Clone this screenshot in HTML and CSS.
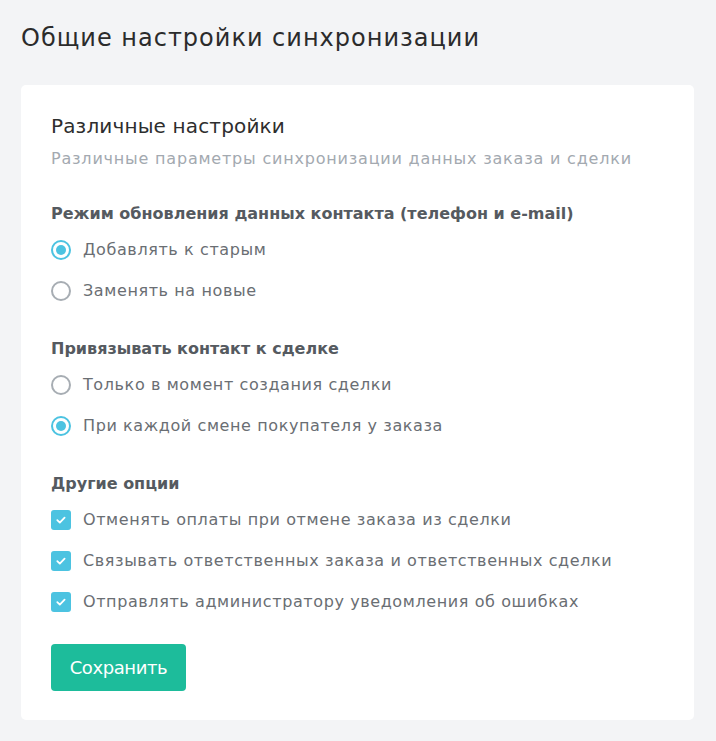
FILE: index.html
```html
<!DOCTYPE html>
<html lang="ru">
<head>
<meta charset="utf-8">
<link rel="stylesheet" href="styles.css">
</head>
<body>
<div class="page">
  <h1 class="page-title">Общие настройки синхронизации</h1>
  <div class="card">
    <h2 class="card-title">Различные настройки</h2>
    <p class="card-subtitle">Различные параметры синхронизации данных заказа и сделки</p>

    <div class="group">
      <div class="group-title">Режим обновления данных контакта (телефон и e-mail)</div>
      <label class="option"><span class="radio checked"></span><span class="label">Добавлять к старым</span></label>
      <label class="option"><span class="radio"></span><span class="label">Заменять на новые</span></label>
    </div>

    <div class="group">
      <div class="group-title">Привязывать контакт к сделке</div>
      <label class="option"><span class="radio"></span><span class="label">Только в момент создания сделки</span></label>
      <label class="option"><span class="radio checked"></span><span class="label">При каждой смене покупателя у заказа</span></label>
    </div>

    <div class="group">
      <div class="group-title">Другие опции</div>
      <label class="option"><span class="check"><svg viewBox="0 0 20 20" width="20" height="20"><path d="M6.3 10.2 L8.8 12.6 L13.6 7.6" fill="none" stroke="#fff" stroke-width="1.8" stroke-linecap="round" stroke-linejoin="round"/></svg></span><span class="label">Отменять оплаты при отмене заказа из сделки</span></label>
      <label class="option"><span class="check"><svg viewBox="0 0 20 20" width="20" height="20"><path d="M6.3 10.2 L8.8 12.6 L13.6 7.6" fill="none" stroke="#fff" stroke-width="1.8" stroke-linecap="round" stroke-linejoin="round"/></svg></span><span class="label">Связывать ответственных заказа и ответственных сделки</span></label>
      <label class="option"><span class="check"><svg viewBox="0 0 20 20" width="20" height="20"><path d="M6.3 10.2 L8.8 12.6 L13.6 7.6" fill="none" stroke="#fff" stroke-width="1.8" stroke-linecap="round" stroke-linejoin="round"/></svg></span><span class="label">Отправлять администратору уведомления об ошибках</span></label>
    </div>

    <button class="btn" type="button">Сохранить</button>
  </div>
</div>
</body>
</html>
```

FILE: styles.css
```css
* { box-sizing: border-box; }
html, body { margin: 0; padding: 0; }
body {
  background: #f3f4f6;
  font-family: "DejaVu Sans", "Open Sans", sans-serif;
  color: #333;
}
.page {
  padding: 20px 22px 21px 21px;
}
.page-title {
  margin: 0 0 29px 0;
  font-size: 24px;
  font-weight: 400;
  line-height: 36px;
  color: #2b2b2b;
  letter-spacing: 1px;
}
.card {
  background: #fff;
  border-radius: 5px;
  padding: 28px 30px 29px 30px;
}
.card-title {
  margin: 0;
  font-size: 20px;
  font-weight: 400;
  line-height: 26px;
  color: #2e2e2e;
  letter-spacing: 0.15px;
}
.card-subtitle {
  margin: 8px 0 0 0;
  font-size: 16px;
  line-height: 24px;
  color: #a3a9b0;
  letter-spacing: 0.8px;
}
.group {
  margin-top: 31px;
  display: flex;
  flex-direction: column;
}
.group + .group { margin-top: 26px; }
.group-title {
  font-size: 16px;
  font-weight: 600;
  line-height: 24px;
  color: #555a60;
  margin-bottom: 3px;
}
.option {
  display: flex;
  align-items: center;
  gap: 12px;
  height: 41px;
}
.label {
  font-size: 16px;
  line-height: 24px;
  color: #6a6e73;
  letter-spacing: 0.6px;
}
.radio {
  width: 20px;
  height: 20px;
  border-radius: 50%;
  border: 2px solid #a7adb3;
  flex: none;
  position: relative;
}
.radio.checked {
  border-color: #4cc3e1;
}
.radio.checked::after {
  content: "";
  position: absolute;
  left: 3px; top: 3px;
  width: 10px; height: 10px;
  border-radius: 50%;
  background: #4cc3e1;
}
.check {
  width: 20px;
  height: 20px;
  border-radius: 3px;
  background: #4cc3e1;
  flex: none;
  display: flex;
}
.btn {
  margin-top: 22px;
  width: 135px;
  height: 47px;
  border: none;
  border-radius: 4px;
  background: #1dbc9b;
  color: #fff;
  font-family: inherit;
  font-size: 18px;
  letter-spacing: -0.4px;
  padding: 0;
}
```
